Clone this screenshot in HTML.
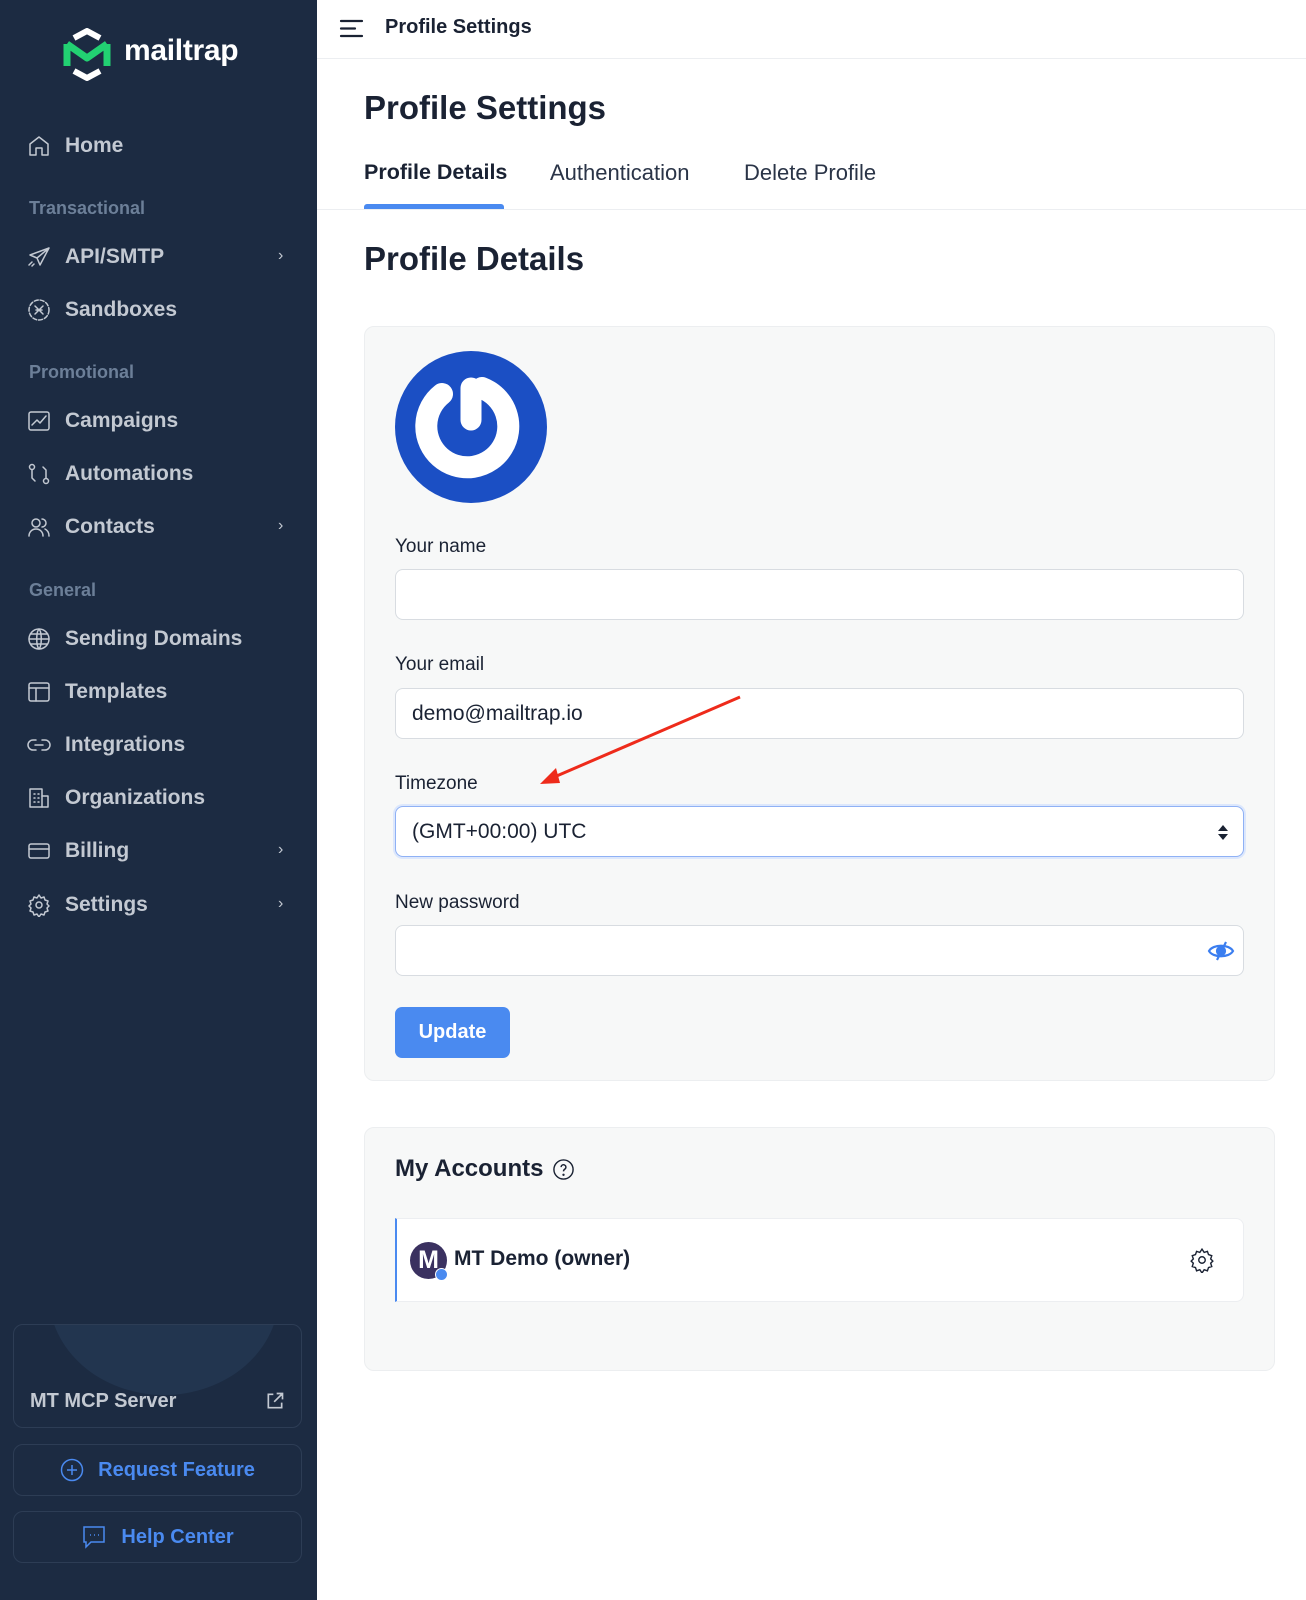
<!DOCTYPE html>
<html><head><meta charset="utf-8"><style>
*{box-sizing:border-box;margin:0;padding:0}
body{width:1306px;height:1600px;position:relative;background:#fff;font-family:"Liberation Sans",sans-serif;overflow:hidden;color:#1a2233}
.sb{position:absolute;left:0;top:0;width:317px;height:1600px;background:#1c2b42}
.it{position:absolute;left:27px;height:30px;display:flex;align-items:center;color:#c3c9d2;font-size:21px;font-weight:bold}
.it svg{width:24px;height:24px;margin-right:14px;fill:none;stroke:#c3c9d2;stroke-width:1.5;stroke-linecap:round;stroke-linejoin:round}
.chev{position:absolute;left:278px;color:#c3c9d2;font-size:16px}
.sec{position:absolute;left:29px;color:#6c7f98;font-size:18px;font-weight:bold}
.bx{position:absolute;left:13px;width:289px;border:1px solid #2d3d55;border-radius:10px;display:flex;align-items:center;justify-content:center;color:#4a8af0;font-size:20px;font-weight:bold}
.abs{position:absolute}
.lbl{position:absolute;left:395px;font-size:19px;color:#1a2233}
.inp{position:absolute;left:395px;width:849px;height:51px;border:1px solid #d8dce1;border-radius:8px;background:#fff;font-size:21px;display:flex;align-items:center;padding-left:16px;color:#1a2233}
.tab{position:absolute;top:160px;font-size:22px;color:#2a3447}
</style></head><body>
<div class="sb">
 <svg class="abs" style="left:63px;top:28px" width="48" height="53" viewBox="0 0 48 53">
  <path d="M11 10 L24 3 L37 10" fill="none" stroke="#fff" stroke-width="6" stroke-linejoin="round"/>
  <path d="M11 43 L24 50 L37 43" fill="none" stroke="#fff" stroke-width="6" stroke-linejoin="round"/>
  <path d="M4 16 L4 38 M44 16 L44 38 M4 16 L24 30 L44 16" fill="none" stroke="#22d172" stroke-width="7" stroke-linejoin="round"/>
 </svg>
 <div class="abs" style="left:124px;top:34px;color:#fff;font-size:30px;font-weight:bold;letter-spacing:-0.3px">mailtrap</div>

 <div class="it" style="top:131px"><svg viewBox="0 0 24 24"><path d="M3 10l9-7 9 7v11h-6v-7h-6v7H3z"/></svg>Home</div>
 <div class="sec" style="top:198px">Transactional</div>
 <div class="it" style="top:242px"><svg viewBox="0 0 24 24"><path d="M22 3L3 10l7 3 3 7zM22 3L10 13M5 17l-3 3M7 19l-2 2"/></svg>API/SMTP</div><div class="chev" style="top:247px">›</div>
 <div class="it" style="top:295px"><svg viewBox="0 0 24 24"><circle cx="12" cy="12" r="10" stroke-dasharray="4 2"/><path d="M8 8l8 8M16 8l-8 8M9 12h6"/></svg>Sandboxes</div>
 <div class="sec" style="top:362px">Promotional</div>
 <div class="it" style="top:406px"><svg viewBox="0 0 24 24"><rect x="2" y="3" width="20" height="18" rx="2"/><path d="M5 16l5-5 3 3 6-7"/></svg>Campaigns</div>
 <div class="it" style="top:459px"><svg viewBox="0 0 24 24"><circle cx="5" cy="5" r="2.5"/><circle cx="19" cy="19" r="2.5"/><path d="M5 8v8l3 3M19 16V8l-3-3"/></svg>Automations</div>
 <div class="it" style="top:512px"><svg viewBox="0 0 24 24"><circle cx="9" cy="8" r="4"/><path d="M2 21c0-4 3-7 7-7s7 3 7 7M15 4a4 4 0 010 8M18 14c2 1 4 3 4 7"/></svg>Contacts</div><div class="chev" style="top:517px">›</div>
 <div class="sec" style="top:580px">General</div>
 <div class="it" style="top:624px"><svg viewBox="0 0 24 24"><circle cx="12" cy="12" r="10"/><path d="M2 12h20M12 2c3 3 3 17 0 20M12 2c-3 3-3 17 0 20M4 7h16M4 17h16"/></svg>Sending Domains</div>
 <div class="it" style="top:677px"><svg viewBox="0 0 24 24"><rect x="2" y="3" width="20" height="18" rx="2"/><path d="M2 8h20M9 8v13"/></svg>Templates</div>
 <div class="it" style="top:730px"><svg viewBox="0 0 24 24"><path d="M9 7H6a5 5 0 000 10h3M15 7h3a5 5 0 010 10h-3M8 12h8"/></svg>Integrations</div>
 <div class="it" style="top:783px"><svg viewBox="0 0 24 24"><rect x="3" y="3" width="12" height="18"/><path d="M15 10h6v11h-6M7 8h1M11 8h1M7 12h1M11 12h1M7 16h1M11 16h1"/></svg>Organizations</div>
 <div class="it" style="top:836px"><svg viewBox="0 0 24 24"><rect x="2" y="5" width="20" height="14" rx="2"/><path d="M2 10h20"/></svg>Billing</div><div class="chev" style="top:841px">›</div>
 <div class="it" style="top:890px"><svg viewBox="0 0 24 24"><circle cx="12" cy="12" r="3"/><path d="M12 2l2 3 3-1 1 3 3 1-1 3 2 2-2 2 1 3-3 1-1 3-3-1-2 3-2-3-3 1-1-3-3-1 1-3-2-2 2-2-1-3 3-1 1-3 3 1z"/></svg>Settings</div><div class="chev" style="top:895px">›</div>

 <div class="bx" style="top:1324px;height:104px;justify-content:flex-start;align-items:flex-end;padding:0 0 14px 16px;color:#c3c9d2;overflow:hidden">
  <div class="abs" style="left:35px;top:-130px;width:230px;height:200px;border-radius:50%;background:#22354f"></div>
  <span style="position:relative">MT MCP Server</span>
  <svg class="abs" style="right:16px;bottom:16px" width="20" height="20" viewBox="0 0 24 24" fill="none" stroke="#c3c9d2" stroke-width="2"><path d="M10 4H4v16h16v-6M14 3h7v7M21 3L11 13"/></svg>
 </div>
 <div class="bx" style="top:1444px;height:52px"><svg width="24" height="24" viewBox="0 0 24 24" fill="none" stroke="#4a8af0" stroke-width="1.5" style="margin-right:14px"><circle cx="12" cy="12" r="10.5"/><path d="M12 7v10M7 12h10"/></svg>Request Feature</div>
 <div class="bx" style="top:1511px;height:52px"><svg width="26" height="24" viewBox="0 0 26 24" fill="none" stroke="#4a8af0" stroke-width="1.5" style="margin-right:14px"><path d="M3 2h20v15H10l-5 5v-5H3z"/><path d="M9 10h1M13 10h1M17 10h1"/></svg>Help Center</div>
</div>

<div class="abs" style="left:317px;top:0;width:989px;height:59px;border-bottom:1px solid #eceef1"></div>
<svg class="abs" style="left:339px;top:19px" width="25" height="19" viewBox="0 0 25 19" stroke="#1a2233" stroke-width="2.2" stroke-linecap="round"><path d="M2 2h21M2 9.5h14M2 17h21"/></svg>
<div class="abs" style="left:385px;top:16px;font-size:20px;font-weight:bold">Profile Settings</div>

<div class="abs" style="left:364px;top:89px;font-size:33px;font-weight:bold">Profile Settings</div>
<div class="tab" style="left:364px;font-weight:bold;color:#1a2233;font-size:21.5px">Profile Details</div>
<div class="tab" style="left:550px">Authentication</div>
<div class="tab" style="left:744px">Delete Profile</div>
<div class="abs" style="left:317px;top:209px;width:989px;height:1px;background:#eceef1"></div>
<div class="abs" style="left:364px;top:204px;width:140px;height:5px;background:#4a8af0;border-radius:3px 3px 0 0"></div>

<div class="abs" style="left:364px;top:240px;font-size:33px;font-weight:bold">Profile Details</div>

<div class="abs" style="left:364px;top:326px;width:911px;height:755px;background:#f7f8f8;border:1px solid #eceef0;border-radius:10px"></div>
<svg class="abs" style="left:394px;top:350px" width="154" height="154" viewBox="0 0 154 154"><circle cx="77" cy="77" r="76" fill="#1b4fc4"/><path d="M48 44 A41 41 0 1 0 88 38" fill="none" stroke="#fff" stroke-width="22" stroke-linecap="round"/><path d="M77 38 V70" stroke="#fff" stroke-width="21" stroke-linecap="round"/></svg>

<div class="lbl" style="top:536px">Your name</div>
<div class="inp" style="top:569px"></div>
<div class="lbl" style="top:654px">Your email</div>
<div class="inp" style="top:688px">demo@mailtrap.io</div>
<div class="lbl" style="top:773px">Timezone</div>
<div class="inp" style="top:806px;border:1.5px solid #8fb1f5;box-shadow:0 0 0 2px #dce7fc">(GMT+00:00) UTC
 <svg class="abs" style="right:14px;top:17px" width="12" height="17" viewBox="0 0 12 17" fill="#1a2233"><path d="M1 7L6 1l5 6zM1 10l5 6 5-6z"/></svg></div>
<div class="lbl" style="top:892px">New password</div>
<div class="inp" style="top:925px"><svg class="abs" style="right:8px;top:13px" width="28" height="24" viewBox="0 0 28 24" fill="none" stroke="#3b7ef0" stroke-width="2.2"><path d="M2 12c4-7 20-7 24 0-4 7-20 7-24 0z"/><circle cx="14" cy="12" r="4" fill="#3b7ef0"/><path d="M10 21L19 3"/></svg></div>
<div class="abs" style="left:395px;top:1007px;width:115px;height:51px;background:#4a8af0;border-radius:7px;color:#fff;font-size:20px;font-weight:bold;display:flex;align-items:center;justify-content:center">Update</div>

<svg class="abs" style="left:0;top:0" width="1306" height="1600"><line x1="740" y1="697" x2="552" y2="778" stroke="#ee2b1b" stroke-width="3"/><path d="M540 784 L556 768 L560 783 Z" fill="#ee2b1b"/></svg>

<div class="abs" style="left:364px;top:1127px;width:911px;height:244px;background:#f7f8f8;border:1px solid #eceef0;border-radius:10px"></div>
<div class="abs" style="left:395px;top:1155px;font-size:24px;font-weight:bold">My Accounts</div>
<svg class="abs" style="left:552px;top:1158px" width="23" height="23" viewBox="0 0 24 24" fill="none" stroke="#1a2233" stroke-width="1.5"><circle cx="12" cy="12" r="10"/><path d="M9.5 9.5a2.5 2.5 0 114 2c-1 .7-1.5 1.2-1.5 2.5"/><circle cx="12" cy="17.5" r=".5" fill="#1a2233"/></svg>
<div class="abs" style="left:395px;top:1218px;width:849px;height:84px;background:#fff;border:1px solid #eceef1;border-left:2px solid #4a8af0;border-radius:0 8px 8px 0"></div>
<div class="abs" style="left:410px;top:1242px;width:37px;height:37px;border-radius:50%;background:#3a3160;color:#fff;font-size:25px;font-weight:bold;display:flex;align-items:center;justify-content:center">M</div>
<div class="abs" style="left:435px;top:1268px;width:13px;height:13px;border-radius:50%;background:#4a8af0;border:1.5px solid #fff"></div>
<div class="abs" style="left:454px;top:1247px;font-size:21px;font-weight:bold;color:#1a2233">MT Demo (owner)</div>
<svg class="abs" style="left:1189px;top:1247px" width="26" height="26" viewBox="0 0 24 24" fill="none" stroke="#1a2233" stroke-width="1.3"><circle cx="12" cy="12" r="3"/><path d="M12 2l2 3 3-1 1 3 3 1-1 3 2 2-2 2 1 3-3 1-1 3-3-1-2 3-2-3-3 1-1-3-3-1 1-3-2-2 2-2-1-3 3-1 1-3 3 1z"/></svg>
</body></html>
